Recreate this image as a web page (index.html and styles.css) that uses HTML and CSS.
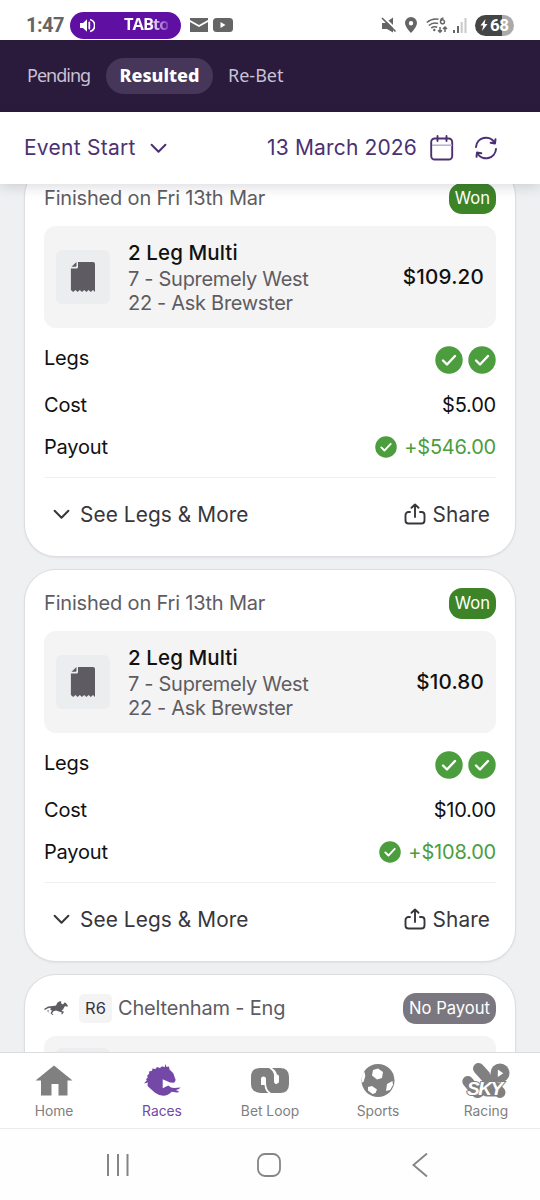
FILE: index.html
```html
<!DOCTYPE html>
<html lang="en">
<head>
<meta charset="utf-8">
<title>Resulted bets</title>
<link rel="stylesheet" href="styles.css">
</head>
<body>
<svg class="defs" width="0" height="0" aria-hidden="true">
  <symbol id="tick" viewBox="0 0 28 28"><circle cx="14" cy="14" r="13.7" fill="#4c9d3d"/><path d="M8 14.500l4 4 8-8.500" fill="none" stroke="#fff" stroke-width="2.400" stroke-linecap="round" stroke-linejoin="round"/></symbol>
  <symbol id="slip" viewBox="0 0 54 54"><path d="M22 12H37a2 2 0 0 1 2 2V42l-2-2-2.200 2-2.200-2-2.200 2-2.200-2-2.200 2-2.200-2-2.200 2-2.200-2-2.200 2-2.300-2V18.500H20.500a1.500 1.500 0 0 0 1.500-1.500z" fill="#5e5c62"/><path d="M15.500 16.800l5-4.800v3.600a1.200 1.200 0 0 1-1.200 1.200z" fill="#5e5c62"/></symbol>
  <symbol id="chevron" viewBox="0 0 16 10"><path d="M1.500 1.500L8 8l6.500-6.500" fill="none" stroke="currentColor" stroke-width="1.900" stroke-linecap="round" stroke-linejoin="round"/></symbol>
  <symbol id="share" viewBox="0 0 22 22"><path d="M11 14V2M7.500 4.800L11 1.500l3.500 3.300M6 9H4.500a3 3 0 0 0-3 3v5.500a3 3 0 0 0 3 3h13a3 3 0 0 0 3-3V12a3 3 0 0 0-3-3H16" fill="none" stroke="#38363d" stroke-width="1.900" stroke-linecap="round" stroke-linejoin="round"/></symbol>
</svg>
<div class="screen">
  <div class="status">
    <span class="clock">1:47</span>
    <span class="media">
      <svg width="16" height="15" viewBox="0 0 16 15"><path d="M1 5h3l4-3.800v12.600L4 10H1z" fill="#fff"/><path d="M10.300 4.500v6" stroke="#fff" stroke-width="1.800" stroke-linecap="round"/><path d="M11 1.500a6.200 6.200 0 0 1 0 12" fill="none" stroke="#fff" stroke-width="1.700"/></svg>
      <b>TABto</b>
    </span>
    <svg class="mail" width="18" height="14" viewBox="0 0 18 14"><path d="M0 0h18v2L9 7 0 2zM0 4l9 5 9-5v10H0z" fill="#656565"/></svg>
    <svg class="video" width="20" height="14" viewBox="0 0 20 14"><rect width="20" height="14" rx="3.500" fill="#656565"/><path d="M7.500 4v6l5-3z" fill="#fff"/></svg>
    <span class="push"></span>
    <svg width="16" height="16" viewBox="0 0 16 16"><path d="M1 6h3L12 .5v15L6 12H1z" fill="#656565"/><path d="M2.500 .300l13 12.500" stroke="#fff" stroke-width="2.200"/><path d="M1 1l13.500 13.500" stroke="#656565" stroke-width="1.700"/></svg>
    <svg class="pin" width="12" height="16" viewBox="0 0 12 16"><path d="M6 0a6 6 0 0 0-6 6c0 4 6 10 6 10s6-6 6-10a6 6 0 0 0-6-6zm0 4a2.200 2.200 0 1 1 0 4.400A2.200 2.200 0 0 1 6 4z" fill="#656565"/></svg>
    <svg class="wifi" width="22" height="17" viewBox="0 0 22 17"><path d="M.8 5.500Q6 1 12.500 2.200M2.800 8.500Q7 5 12 6.500M5.300 11Q8 9 11.200 10.200" fill="none" stroke="#656565" stroke-width="1.600"/><circle cx="8.300" cy="13" r="1.200" fill="#656565"/><path d="M14 10v5m-2-1.800l2 2 2-2M19 15v-5m-2 2l2-2 2 2" fill="none" stroke="#656565" stroke-width="1.500"/><path d="M17.500 1q-3 .3-3 3.800a2 2 0 1 0 .3-1" fill="none" stroke="#656565" stroke-width="1.500"/></svg>
    <svg class="signal" width="14" height="15" viewBox="0 0 14 15"><path d="M0 12h2v3H0zM4 8h2v7H4z" fill="#656565"/><path d="M7.700 4h2v11h-2zM11.500 0h2v15h-2z" fill="#c9c9c9"/></svg>
    <span class="battery"><svg width="8" height="12" viewBox="0 0 8 12"><path d="M5.500 0L.5 6.500h2.800L2 12l5.500-7H4.600z" fill="#fff"/></svg>68</span>
  </div>
  <div class="tabs">
    <span class="tab pending">Pending</span>
    <span class="tab active">Resulted</span>
    <span class="tab rebet">Re-Bet</span>
  </div>
  <div class="filter">
    <span class="sort">Event Start</span>
    <svg class="sort-arrow" width="17" height="11"><use href="#chevron"/></svg>
    <span class="push"></span>
    <span class="date">13 March 2026</span>
    <svg class="calendar" width="24" height="26" viewBox="0 0 24 26"><rect x="1.200" y="3.500" width="21" height="21" rx="3.500" fill="none" stroke="#4b3173" stroke-width="1.900"/><path d="M2 10.200h20" stroke="#b9aecb" stroke-width="1.500"/><path d="M7.500 1v5M16.500 1v5" stroke="#4b3173" stroke-width="1.900" stroke-linecap="round"/></svg>
    <svg class="refresh" width="24" height="24" viewBox="0 0 24 24"><path d="M2 11a10 10 0 0 1 18.500-4.500M22 13a10 10 0 0 1-18.500 4.500M21.500 3.200L21 7.500l-4.300-.7M2.500 20.800L3 16.500l4.300.7" fill="none" stroke="#4b3173" stroke-width="2" stroke-linecap="round" stroke-linejoin="round"/></svg>
  </div>
  <div class="list">
    <div class="card">
      <div class="head"><span class="when">Finished on Fri 13th Mar</span><span class="badge">Won</span></div>
      <div class="bet">
        <svg class="thumb" width="54" height="54"><use href="#slip"/></svg>
        <div class="info"><div class="name">2 Leg Multi</div><div>7 - Supremely West</div><div>22 - Ask Brewster</div></div>
        <span class="odds">$109.20</span>
      </div>
      <div class="row legs"><span>Legs</span><span class="ticks"><svg width="28" height="28"><use href="#tick"/></svg><svg width="28" height="28"><use href="#tick"/></svg></span></div>
      <div class="row"><span>Cost</span><span class="amount">$5.00</span></div>
      <div class="row"><span>Payout</span><span class="win"><svg width="22" height="22"><use href="#tick"/></svg><span class="amount">+$546.00</span></span></div>
      <div class="actions"><svg width="17" height="11"><use href="#chevron"/></svg><span class="more">See Legs &amp; More</span><span class="push"></span><svg width="22" height="22"><use href="#share"/></svg><span class="share">Share</span></div>
    </div>
    <div class="card">
      <div class="head"><span class="when">Finished on Fri 13th Mar</span><span class="badge">Won</span></div>
      <div class="bet">
        <svg class="thumb" width="54" height="54"><use href="#slip"/></svg>
        <div class="info"><div class="name">2 Leg Multi</div><div>7 - Supremely West</div><div>22 - Ask Brewster</div></div>
        <span class="odds">$10.80</span>
      </div>
      <div class="row legs"><span>Legs</span><span class="ticks"><svg width="28" height="28"><use href="#tick"/></svg><svg width="28" height="28"><use href="#tick"/></svg></span></div>
      <div class="row"><span>Cost</span><span class="amount">$10.00</span></div>
      <div class="row"><span>Payout</span><span class="win"><svg width="22" height="22"><use href="#tick"/></svg><span class="amount">+$108.00</span></span></div>
      <div class="actions"><svg width="17" height="11"><use href="#chevron"/></svg><span class="more">See Legs &amp; More</span><span class="push"></span><svg width="22" height="22"><use href="#share"/></svg><span class="share">Share</span></div>
    </div>
    <div class="card">
      <div class="head">
        <svg class="racer" width="24" height="15" viewBox="0 0 24 15"><path d="M0 8l4-2.500 5-.5 3-.5 1.500-3L15 .8l1-.8 1.300.8-.3 1.500 2 1.200 1.500-2L22 2l2 3-1 .7-2-.7-2 3.500-1.500 1 2.500 1.500-2 2.500-.8-.5.8-1.600-3-1-3-.8-2.500.6-1.500 2 1.500 1.500-1 .3-2-1.700 1.500-2.800-2-.7-3 1L5 12l-.8-.2.3-2L7 8l-1-1.200-2.500.7L1 9z" fill="#5e5c62"/></svg>
        <span class="race">R6</span><span class="when">Cheltenham - Eng</span><span class="badge none">No Payout</span>
      </div>
      <div class="bet opening"><div class="thumb"></div></div>
    </div>
  </div>
  <div class="bottom">
    <div class="item"><svg width="38" height="34" viewBox="0 0 38 34"><path d="M19 1.500l18.500 15h-5V31.500H23.500V20h-7v11.500H6V16.500H.5z" fill="#808080"/></svg>Home</div>
    <div class="item on"><svg width="38" height="34" viewBox="0 0 38 34"><path d="M22.700 0L23.500 3 26 2.500 26.500 5.500 30.300 9.300 32.700 16 31.300 18.700 27 18.500 19.700 15.300V24.300L25.300 21.500Q28 24 31 24L37.700 23.500 35.500 25.300 33 26 36.500 28 34 28.500 28.700 27.700Q25 31.700 20.300 31.700 16 31.500 12 28.700L5.300 22.700Q3.800 20.500 5 18.500L1 19.500 4 16 2.800 15.500 4.900 13.300 4 12 6.200 9.500 6 7.500 9 6.800 9.500 4.500 12.500 5 14 3 17 4 19 2.200 21.500 3.200z" fill="#7448a7"/></svg>Races</div>
    <div class="item"><svg width="38" height="34" viewBox="0 0 38 34"><path d="M9 4h20q9 0 9 9v7q0 9-9 9H9.500Q0 28 0 20v-7Q0 4 9 4z" fill="#808080"/><path d="M10 21v-6a2.500 2.500 0 0 1 5 0v4Q15 26 20 29H17.500Q14 27 13.500 21zM18 4h3q5 3 5 8v7.500a2 2 0 0 0 2-2V12q-.5-1.500-2-1.500V20a2.500 2.500 0 0 1-3-2.500V12Q23 7 18 4z" fill="#fff"/></svg>Bet Loop</div>
    <div class="item"><svg width="38" height="34" viewBox="0 0 38 34"><circle cx="19" cy="16.500" r="16.500" fill="#808080"/><path d="M14 6l5-1.500 5 3.500-1 6-5 1.500-5-4zM3.500 9l2-1 .8 4L4.500 18l-2 .5zM9 23l4-1 5 3.500-1.500 3.500-3 1-4.500-3.500zM28 20l5.500-3 .5 4-3 5-4 1z" fill="#fff"/><path d="M24 1.500l6 3 4.500 6-4-2z" fill="#808080"/></svg>Sports</div>
    <div class="item"><svg class="skylogo" width="48" height="34" viewBox="0 0 48 34"><g stroke="#808080" stroke-width="11" stroke-linecap="round"><path d="M16.500 4.500L38 28.500M5.800 17.500L15 28.500M16 28.500L28 20M25 27h8"/></g><path d="M28 8.500l8 9.500" stroke="#fff" stroke-width="1.500"/><circle cx="38" cy="9" r="9.500" fill="#808080"/><path d="M35.800 5.500v7.500l5.500-3.750z" fill="#fff"/><text x="5" y="30.500" class="sky">SKY</text></svg>Racing</div>
  </div>
  <div class="nav">
    <svg width="24" height="24" viewBox="0 0 24 24"><path d="M2 1v22M12 1v22M21.500 1v22" stroke="#858585" stroke-width="2"/></svg>
    <svg class="home-key" width="24" height="24" viewBox="0 0 24 24"><rect x="1" y="1" width="22" height="22" rx="7" fill="none" stroke="#858585" stroke-width="1.800"/></svg>
    <svg width="16" height="24" viewBox="0 0 16 24"><path d="M15 .5L1.500 12 15 23.500" fill="none" stroke="#858585" stroke-width="1.900"/></svg>
  </div>
</div>
</body>
</html>
```
FILE: styles.css
```css
* { box-sizing: border-box; }
body { margin: 0; font-family: Inter, sans-serif; font-size: 20px; color: #111; }
svg { display: block; flex: none; }
.defs { position: absolute; }
.screen { width: 540px; height: 1200px; display: flex; flex-direction: column; overflow: hidden; background: #fff; }
.push { flex: 1; }
span { white-space: nowrap; }

.status { height: 40px; flex: none; display: flex; align-items: center; padding: 10px 26px 0; }
.clock { font: 700 20px Roboto, sans-serif; letter-spacing: -.5px; color: #656565; width: 44px; }
.media { width: 111px; height: 27px; border-radius: 14px; background: #600fa3; color: #fff; display: flex; align-items: center; padding-left: 9px; }
.media b { font: 700 16.5px "Open Sans", sans-serif; line-height: 24px; padding-bottom: 2px; letter-spacing: -1px; margin-left: 29px; background: linear-gradient(90deg, #fff 60%, #7c3cb4 100%); background-clip: text; color: transparent; }
.mail { margin-left: 9px; }
.video { margin-left: 5px; }
.pin { margin-left: 8px; }
.wifi { margin-left: 9px; }
.signal { margin-left: 5px; }
.battery { width: 39px; height: 21px; border-radius: 11px; margin-left: 8px; background: linear-gradient(90deg, #454545 68%, #aaa 68%); color: #fff; font: 700 17px Roboto, sans-serif; letter-spacing: -.5px; display: flex; align-items: center; padding-left: 5px; gap: 2px; }

.tabs { height: 72px; flex: none; background: #2a1a3c; display: flex; align-items: center; font-family: "Noto Sans", sans-serif; font-size: 18px; color: #c9c1d4; padding-left: 27px; }
.tab { height: 36px; line-height: 34px; }
.tab.active { width: 107px; text-align: center; border-radius: 18px; background: #45365a; color: #fff; font-weight: 800; margin: 0 15px; }
.pending { width: 64px; letter-spacing: -1px; }

.filter { height: 72px; flex: none; display: flex; align-items: center; padding: 0 42px 0 24px; color: #4b3173; font-size: 21px; background: #fff; position: relative; z-index: 1; box-shadow: 0 3px 12px rgba(40, 40, 60, .16); }
.sort { letter-spacing: .25px; }
.date { letter-spacing: .15px; }
.sort, .date { padding-bottom: 1px; }
.sort-arrow { margin-left: 14px; }
.calendar { margin-left: 13px; }
.refresh { margin-left: 20px; }

.list { height: 868px; flex: none; background: #eff0f2; overflow: hidden; padding: 0 25px; }
.card { height: 391px; margin-bottom: 14px; background: #fff; border-radius: 31px; padding: 18px 19px 0; box-shadow: 0 0 0 1px #dddee2, 0 1px 3px rgba(0, 0, 0, .12); }
.card:first-child { margin-top: -19px; }
.head { height: 31px; display: flex; align-items: center; }
.when { color: #5e5c62; line-height: 28px; padding-bottom: 2px; letter-spacing: -.18px; }
.badge { margin-left: auto; height: 31px; line-height: 31px; border-radius: 13px; padding: 0 6px; font-size: 16.6px; color: #fff; background: #3c8427; }
.badge.none { background: #7b7780; }
.bet { height: 102px; margin-top: 12px; border-radius: 12px; background: #f4f4f4; display: flex; align-items: center; padding: 0 12px; }
.bet.opening { align-items: flex-start; padding-top: 12px; }
.thumb { width: 54px; height: 54px; border-radius: 6px; background: #ebedef; }
.info { margin-left: 18px; color: #5e5c62; line-height: 24px; letter-spacing: -.3px; padding-bottom: 2px; }
.name { color: #111; font-weight: 500; font-size: 20.5px; letter-spacing: .1px; line-height: 29px; }
.odds { margin-left: auto; font-weight: 500; font-size: 20.6px; letter-spacing: .2px; padding-bottom: 1px; }
.row { height: 42px; display: flex; align-items: center; justify-content: space-between; letter-spacing: -.2px; }
.row.legs { height: 56px; align-items: flex-start; padding-top: 19px; line-height: 22px; }
.ticks { display: flex; gap: 5px; margin-top: -1px; }
.win { display: flex; align-items: center; gap: 7px; color: #4c9d3d; }
.actions { margin-top: 9px; border-top: 1px solid #f0f0f0; height: 73px; display: flex; align-items: center; padding: 0 6px 0 9px; color: #38363d; font-size: 20.8px; }
.more { margin-left: 10px; }
.more, .share { letter-spacing: .1px; }
.share { margin-left: 7px; }
.race { width: 33px; height: 29px; line-height: 29px; font-size: 16.500px; border-radius: 5px; background: #f4f4f4; color: #38363d; text-align: center; margin: 0 6px 0 11px; }

.bottom { height: 77px; flex: none; display: flex; border-top: 1px solid #dcdcdf; border-bottom: 1px solid #ebebed; background: #fff; }
.item { width: 108px; display: flex; flex-direction: column; align-items: center; padding-top: 11px; font-size: 13.800px; line-height: 26px; color: #808080; }
.item svg { height: 34px; }
.item.on { color: #7448a7; }
.skylogo { overflow: visible; }
.sky { font: italic 700 19px "Liberation Sans", sans-serif; letter-spacing: -1.5px; fill: #fff; stroke: #808080; stroke-width: 2px; paint-order: stroke; }
.nav { height: 71px; flex: none; display: flex; align-items: center; justify-content: space-between; padding: 1px 112px 0 106px; background: #fefefe; }
.home-key { margin-right: 4px; }
```
